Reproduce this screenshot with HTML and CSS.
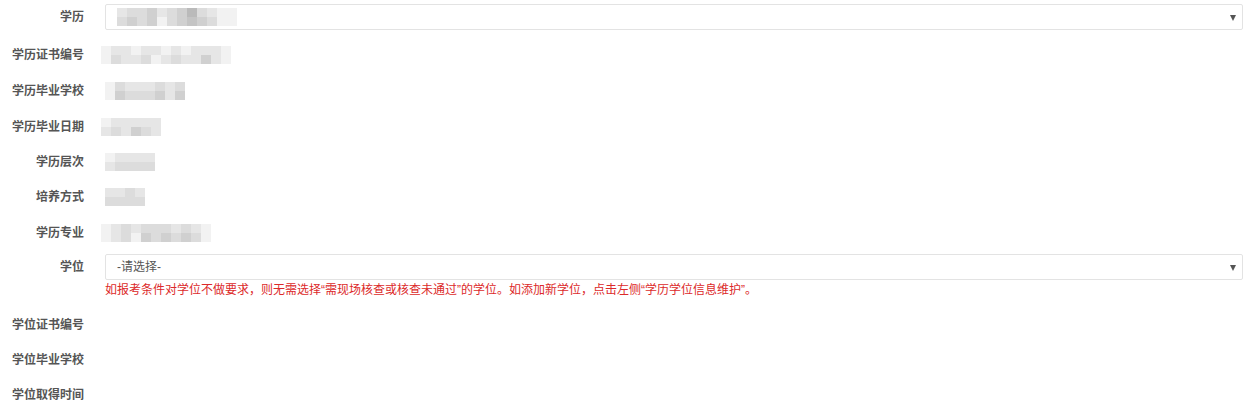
FILE: index.html
```html
<!DOCTYPE html>
<html lang="zh-CN">
<head>
<meta charset="utf-8">
<title>学历学位</title>
<link rel="stylesheet" href="styles.css">
</head>
<body>
<form class="form">
  <div class="row row-select r37">
    <label class="lbl">学历</label>
    <div class="field">
      <div class="select">
        <div class="mosaic m-sel">
          <span class="g1"></span><span class="g2"></span><span class="g2"></span><span class="g3"></span><span class="g1"></span><span class="g2"></span><span class="g3"></span><span class="g5"></span><span class="g2"></span><span class="g1"></span><span class="g0"></span><span class="g0"></span>
          <span class="g2"></span><span class="g3"></span><span class="g2"></span><span class="g3"></span><span class="g0"></span><span class="g2"></span><span class="g3"></span><span class="g4"></span><span class="g3"></span><span class="g2"></span><span class="g0"></span><span class="g0"></span>
        </div>
        <span class="arrow"></span>
      </div>
    </div>
  </div>

  <div class="row r36">
    <label class="lbl">学历证书编号</label>
    <div class="field">
      <div class="mosaic m13 shift">
        <span class="g0"></span><span class="g1"></span><span class="g1"></span><span class="g0"></span><span class="g1"></span><span class="g1"></span><span class="g0"></span><span class="g1"></span><span class="g0"></span><span class="g1"></span><span class="g1"></span><span class="g1"></span><span class="g0"></span>
        <span class="g0"></span><span class="g2"></span><span class="g1"></span><span class="g1"></span><span class="g2"></span><span class="g0"></span><span class="g1"></span><span class="g2"></span><span class="g1"></span><span class="g1"></span><span class="g3"></span><span class="g1"></span><span class="g0"></span>
      </div>
    </div>
  </div>

  <div class="row r36">
    <label class="lbl">学历毕业学校</label>
    <div class="field">
      <div class="mosaic m8">
        <span class="g0"></span><span class="g2"></span><span class="g1"></span><span class="g1"></span><span class="g1"></span><span class="g2"></span><span class="g1"></span><span class="g2"></span>
        <span class="g0"></span><span class="g3"></span><span class="g2"></span><span class="g2"></span><span class="g2"></span><span class="g3"></span><span class="g1"></span><span class="g3"></span>
      </div>
    </div>
  </div>

  <div class="row r35">
    <label class="lbl">学历毕业日期</label>
    <div class="field">
      <div class="mosaic m6 shift">
        <span class="g0"></span><span class="g1"></span><span class="g1"></span><span class="g1"></span><span class="g1"></span><span class="g1"></span>
        <span class="g1"></span><span class="g2"></span><span class="g1"></span><span class="g3"></span><span class="g2"></span><span class="g1"></span>
      </div>
    </div>
  </div>

  <div class="row r35">
    <label class="lbl">学历层次</label>
    <div class="field">
      <div class="mosaic m5">
        <span class="g0"></span><span class="g1"></span><span class="g1"></span><span class="g1"></span><span class="g1"></span>
        <span class="g1"></span><span class="g2"></span><span class="g2"></span><span class="g2"></span><span class="g2"></span>
      </div>
    </div>
  </div>

  <div class="row r36">
    <label class="lbl">培养方式</label>
    <div class="field">
      <div class="mosaic m4">
        <span class="g1"></span><span class="g1"></span><span class="g2"></span><span class="g1"></span>
        <span class="g2"></span><span class="g2"></span><span class="g2"></span><span class="g2"></span>
      </div>
    </div>
  </div>

  <div class="row r35">
    <label class="lbl">学历专业</label>
    <div class="field">
      <div class="mosaic m11 shift">
        <span class="g0"></span><span class="g1"></span><span class="g2"></span><span class="g1"></span><span class="g2"></span><span class="g2"></span><span class="g2"></span><span class="g1"></span><span class="g2"></span><span class="g1"></span><span class="g0"></span>
        <span class="g0"></span><span class="g1"></span><span class="g2"></span><span class="g0"></span><span class="g3"></span><span class="g2"></span><span class="g3"></span><span class="g2"></span><span class="g3"></span><span class="g2"></span><span class="g0"></span>
      </div>
    </div>
  </div>

  <div class="row row-select r-degree">
    <label class="lbl">学位</label>
    <div class="field">
      <div class="select">
        <span class="placeholder">-请选择-</span>
        <span class="arrow"></span>
      </div>
      <p class="hint">如报考条件对学位不做要求，则无需选择“需现场核查或核查未通过”的学位。如添加新学位，点击左侧“学历学位信息维护”。</p>
    </div>
  </div>

  <div class="row r35">
    <label class="lbl">学位证书编号</label>
    <div class="field"></div>
  </div>

  <div class="row r35">
    <label class="lbl">学位毕业学校</label>
    <div class="field"></div>
  </div>

  <div class="row r35">
    <label class="lbl">学位取得时间</label>
    <div class="field"></div>
  </div>
</form>
</body>
</html>
```

FILE: styles.css
```css
* { box-sizing: border-box; }

html, body {
  margin: 0;
  padding: 0;
  background: #fff;
}

body {
  font-family: "Liberation Sans", "Noto Sans CJK SC", sans-serif;
  font-size: 12px;
  color: #555;
  overflow: hidden;
}

.form {
  display: flex;
  flex-direction: column;
  padding-right: 5px;
}

.row {
  display: flex;
  align-items: center;
}

.r35 { height: 35px; }
.r36 { height: 36px; }

.row-select { align-items: flex-start; }
.r37 { height: 37px; padding-top: 4px; }
.r-degree { height: 57px; padding-top: 4px; }

.lbl {
  flex: 0 0 84px;
  text-align: right;
  font-weight: bold;
  color: #555;
  line-height: 16px;
}

.row-select .lbl {
  line-height: 26px;
}

.field {
  flex: 1;
  margin-left: 21px;
  display: flex;
  flex-direction: column;
  justify-content: center;
}

.select {
  position: relative;
  height: 26px;
  border: 1px solid #e3e3e3;
  border-radius: 2px;
  display: flex;
  align-items: center;
  padding-left: 11px;
  background: #fff;
}

.placeholder {
  color: #555;
  line-height: 16px;
}

.arrow {
  position: absolute;
  right: 6px;
  top: 10px;
  width: 0;
  height: 0;
  border-left: 3.5px solid transparent;
  border-right: 3.5px solid transparent;
  border-top: 6px solid #555;
}

.hint {
  margin: 2px 0 0;
  color: #dc2a2a;
  line-height: 16px;
  font-size: 12px;
  white-space: nowrap;
}

/* blurred (mosaic) values */
.mosaic {
  display: grid;
  grid-auto-rows: 9px;
  grid-template-columns: repeat(var(--n), 10px);
  filter: blur(0.6px);
}
.mosaic span { display: block; }
.shift { margin-left: -4px; }

.m-sel { --n: 12; }
.m13 { --n: 13; }
.m11 { --n: 11; }
.m8 { --n: 8; }
.m6 { --n: 6; }
.m5 { --n: 5; }
.m4 { --n: 4; }

.g0 { background: #f2f2f2; }
.g1 { background: #e6e6e6; }
.g2 { background: #dcdcdc; }
.g3 { background: #d0d0d0; }
.g4 { background: #c4c4c4; }
.g5 { background: #bababa; }
```
